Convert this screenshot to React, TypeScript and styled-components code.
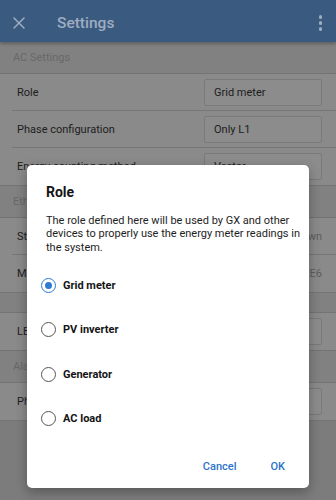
import styled, { createGlobalStyle } from "styled-components";
import { X } from "lucide-react";
import { useState } from "react";

const GlobalStyle = createGlobalStyle`
  html, body {
    margin: 0;
    padding: 0;
  }
  body {
    font-family: Roboto, "Liberation Sans", sans-serif;
    background: #7c7c7c;
  }
`;

const roles = ["Grid meter", "PV inverter", "Generator", "AC load"];

const App = () => {
  const [role, setRole] = useState("Grid meter");

  return (
    <Screen>
      <GlobalStyle />
      <TopBar>
        <CloseIcon>
          <X size={20} strokeWidth={1.8} />
        </CloseIcon>
        <Title>Settings</Title>
        <Kebab>
          <Dot />
          <Dot />
          <Dot />
        </Kebab>
      </TopBar>

      <SectionHeader>AC Settings</SectionHeader>
      <Row>
        <Label>Role</Label>
        <ValueBox>Grid meter</ValueBox>
      </Row>
      <Row>
        <Label>Phase configuration</Label>
        <ValueBox>Only L1</ValueBox>
      </Row>
      <Row $last>
        <Label>Energy counting method</Label>
        <ValueBox>Vector</ValueBox>
      </Row>

      <SectionHeader>Ethernet</SectionHeader>
      <Row>
        <Label>State</Label>
        <Value>Unknown</Value>
      </Row>
      <Row $last>
        <Label>MAC address</Label>
        <Value>00:1E:C0:2A:3B:E6</Value>
      </Row>

      <SectionHeader $empty />
      <Row $last>
        <Label>LED</Label>
        <ValueBox>On</ValueBox>
      </Row>

      <SectionHeader>Alarms</SectionHeader>
      <Row $last>
        <Label>Phase rotation</Label>
        <ValueBox>Disabled</ValueBox>
      </Row>

      <Layer>
        <Dialog>
          <DialogTitle>Role</DialogTitle>
          <DialogText>
            The role defined here will be used by GX and other devices to
            properly use the energy meter readings in the system.
          </DialogText>
          <Options>
            {roles.map((r) => (
              <Option key={r} onClick={() => setRole(r)}>
                <Radio $checked={role === r} />
                <OptionLabel>{r}</OptionLabel>
              </Option>
            ))}
          </Options>
          <Actions>
            <TextButton>Cancel</TextButton>
            <TextButton>OK</TextButton>
          </Actions>
        </Dialog>
      </Layer>
    </Screen>
  );
};

export default App;

const Screen = styled.div`
  position: relative;
  width: 336px;
  height: 500px;
  overflow: hidden;
  background: #7c7c7c;
`;

const TopBar = styled.div`
  height: 42px;
  box-sizing: border-box;
  background: #3a5a7f;
  display: flex;
  align-items: center;
  padding: 4px 12px 0 9px;
  box-shadow: 0 2px 3px rgba(0, 0, 0, 0.25);
  position: relative;
  z-index: 1;
`;

const CloseIcon = styled.div`
  width: 20px;
  height: 20px;
  color: #9eadc0;
  display: flex;
`;

const Title = styled.div`
  flex: 1;
  margin-left: 28px;
  font-size: 15.5px;
  font-weight: 500;
  color: #9eadc0;
`;

const Kebab = styled.div`
  display: flex;
  flex-direction: column;
  gap: 2.5px;
  padding: 0 2px;
`;

const Dot = styled.span`
  width: 3.5px;
  height: 3.5px;
  border-radius: 50%;
  background: #9eadc0;
`;

const SectionHeader = styled.div<{ $empty?: boolean }>`
  height: ${(p) => (p.$empty ? "19px" : "31px")};
  background: #818181;
  border-bottom: 1px solid #747474;
  display: flex;
  align-items: center;
  padding-left: 13px;
  font-size: 11px;
  color: #686868;
`;

const Row = styled.div<{ $last?: boolean }>`
  height: 37px;
  background: #8a8a8a;
  display: flex;
  align-items: center;
  padding: 0 14px 0 17px;
  position: relative;
  border-bottom: ${(p) => (p.$last ? "1px solid #747474" : "none")};

  &::after {
    content: "";
    display: ${(p) => (p.$last ? "none" : "block")};
    position: absolute;
    left: 12px;
    right: 0;
    bottom: 0;
    height: 1px;
    background: #767676;
  }
`;

const Label = styled.div`
  flex: 1;
  font-size: 11px;
  color: #1d1d1d;
  white-space: nowrap;
`;

const ValueBox = styled.div`
  width: 107px;
  height: 25px;
  border: 1px solid #7a7a7a;
  border-radius: 2px;
  background: #8c8c8c;
  display: flex;
  align-items: center;
  padding-left: 9px;
  font-size: 11px;
  color: #1d1d1d;
`;

const Value = styled.div`
  font-size: 11px;
  color: #5e5e5e;
`;

const Layer = styled.div`
  position: absolute;
  inset: 0;
  z-index: 2;
  padding-top: 165px;
`;

const Dialog = styled.div`
  margin: 0 27px;
  height: 323px;
  box-sizing: border-box;
  background: #ffffff;
  border-radius: 5px;
  box-shadow: 0 4px 12px rgba(0, 0, 0, 0.3);
  padding: 17px 8px 0 19px;
  display: flex;
  flex-direction: column;
`;

const DialogTitle = styled.div`
  font-size: 14px;
  font-weight: 700;
  color: #141414;
  line-height: 20px;
`;

const DialogText = styled.div`
  margin-top: 12px;
  font-size: 11px;
  line-height: 13.3px;
  color: #1e1e1e;
`;

const Options = styled.div`
  margin-top: 9px;
  display: flex;
  flex-direction: column;
`;

const Option = styled.div`
  height: 44.5px;
  display: flex;
  align-items: center;
  cursor: pointer;
`;

const Radio = styled.span<{ $checked: boolean }>`
  width: 15px;
  height: 15px;
  box-sizing: border-box;
  border-radius: 50%;
  border: 1.6px solid ${(p) => (p.$checked ? "#2f7bd3" : "#555555")};
  display: flex;
  align-items: center;
  justify-content: center;
  margin-left: -5px;

  &::after {
    content: "";
    display: ${(p) => (p.$checked ? "block" : "none")};
    width: 7px;
    height: 7px;
    border-radius: 50%;
    background: #2f7bd3;
  }
`;

const OptionLabel = styled.span`
  margin-left: 7px;
  font-size: 11px;
  font-weight: 700;
  color: #141414;
`;

const Actions = styled.div`
  margin-top: auto;
  height: 44px;
  display: flex;
  justify-content: flex-end;
  align-items: center;
  gap: 34px;
  padding-right: 16px;
`;

const TextButton = styled.button`
  border: none;
  background: none;
  padding: 0;
  font-family: Roboto, "Liberation Sans", sans-serif;
  font-size: 11px;
  font-weight: 500;
  color: #2b73c8;
  cursor: pointer;
`;
